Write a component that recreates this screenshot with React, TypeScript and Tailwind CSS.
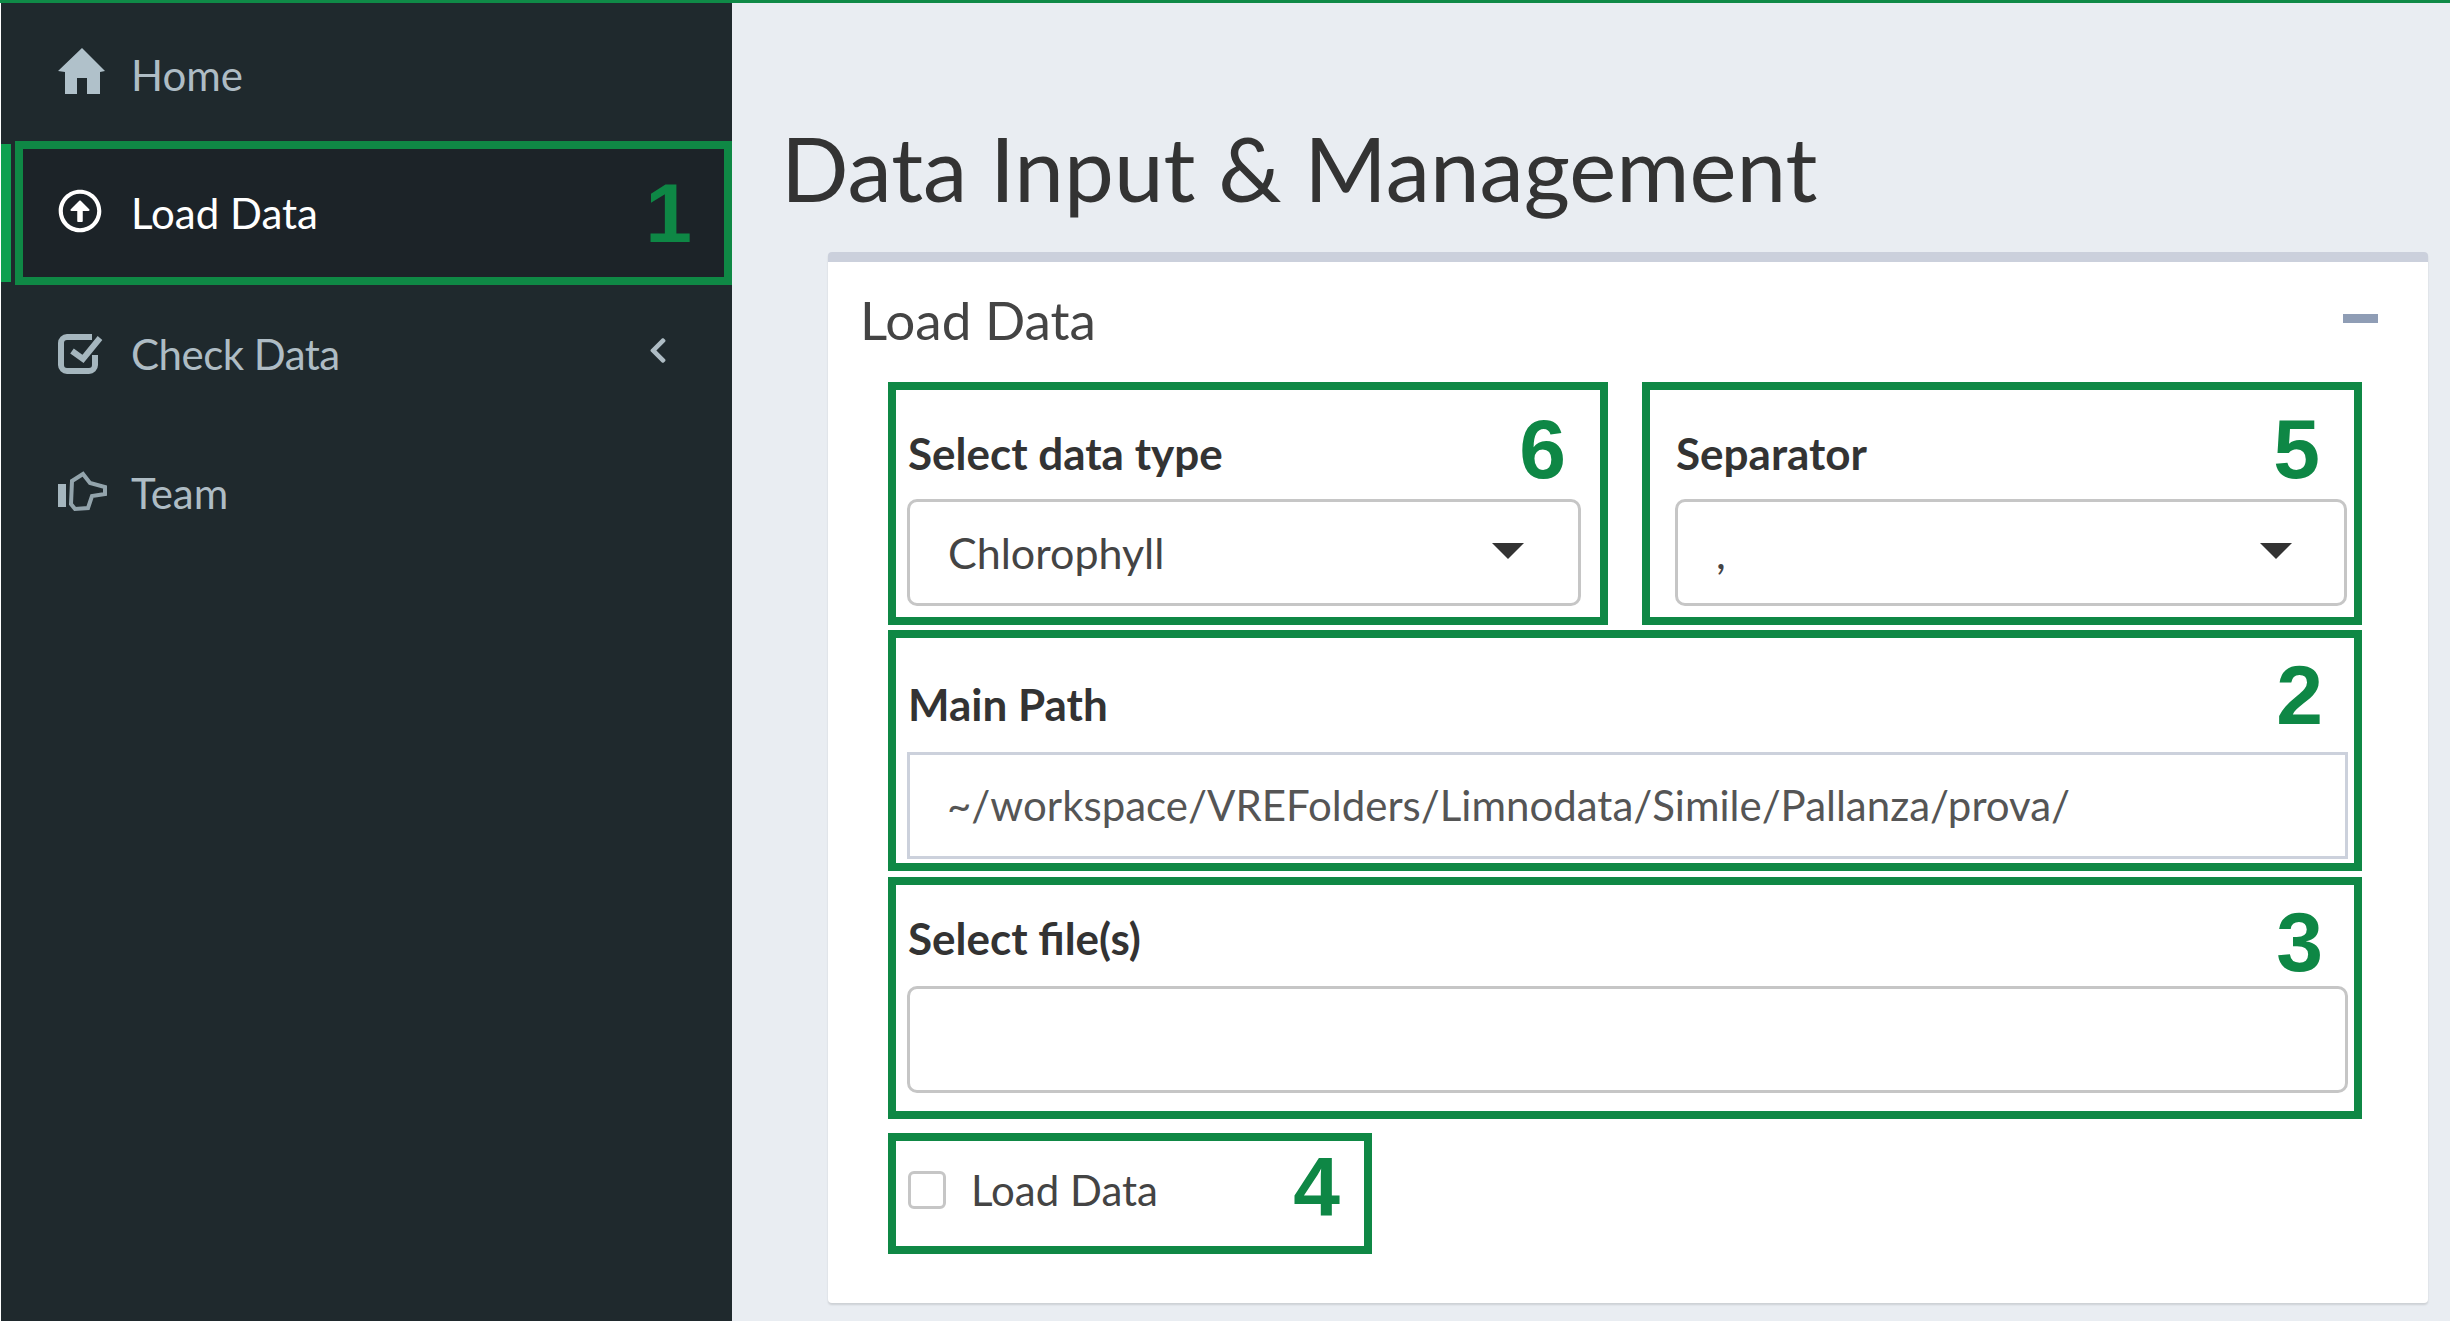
import React from 'react';
import { FaRegArrowAltCircleUp, FaChevronLeft } from 'react-icons/fa';

const Num = ({ n, className }: { n: string; className: string }) => (
  <span className={`absolute font-['Liberation_Sans'] font-bold text-[84px] leading-none text-[#0e8745] ${className}`}>{n}</span>
);

const Caret = () => (
  <svg viewBox="0 0 32 16" className="w-[32px] h-[16px] fill-[#333] -mt-[3px]">
    <polygon points="0,0 32,0 16,16" />
  </svg>
);

const HomeIcon = () => (
  <svg viewBox="0 0 47 46" className="w-[47px] h-[46px] fill-[#b0c1ca] -mt-[9px]">
    <path d="M24 0 L47 23 L42 24 V46 H29 V30 H19 V46 H7 V24 L0 23 Z" />
  </svg>
);

const CheckIcon = () => (
  <svg viewBox="0 0 45 40" className="w-[45px] h-[40px] fill-none stroke-[#a5b6be] stroke-[6px]">
    <path d="M34 3 H9 a6 6 0 0 0 -6 6 V31 a6 6 0 0 0 6 6 H31 a6 6 0 0 0 6 -6 V21" />
    <path d="M14 17 L25 25 L42 4" />
  </svg>
);

const HandIcon = () => (
  <svg viewBox="0 0 50 41" className="w-[50px] h-[41px] -mt-[4px]">
    <rect x="0" y="13" width="8" height="23" fill="#a5b6be" />
    <path d="M14 10 L25 3 L32 12 L47 16 V23 L34 25 L30 37 L17 38 L13 33 Z" fill="none" stroke="#93a4ac" strokeWidth="4" />
  </svg>
);

const Field = ({ label, className }: { label: string; className: string }) => (
  <div className={`flex items-end pl-[1px] font-bold text-[44px] leading-[50px] text-[#333] ${className}`}>{label}</div>
);

const SelectBox = ({ value, caretPad }: { value: string; caretPad: string }) => (
  <div className={`h-[107px] border-[3px] border-[#c6c6c6] rounded-[10px] bg-white flex items-center justify-between pl-[38px] ${caretPad}`}>
    <span className="text-[43px] leading-[50px] text-[#444]">{value}</span>
    <Caret />
  </div>
);

export default function App() {
  return (
    <div className="h-screen w-full overflow-hidden flex flex-col font-['Lato',sans-serif] bg-[#e9edf2]">
      <div className="h-[3px] bg-[#0f8a47]" />
      <div className="flex-1 flex min-h-0">
        {/* sidebar */}
        <aside className="w-[732px] border-l border-white bg-[#1f292d] text-[42px] text-[#aebcc4]">
          <div className="h-[138px] pl-[57px] pt-[6px] flex items-center">
            <span className="w-[73px]"><HomeIcon /></span>
            Home
          </div>
          <div className="h-[144px] flex">
            <div className="w-[10px] my-[3px] bg-[#0ea050]" />
            <div className="relative ml-[4px] flex-1 border-[8px] border-[#0f8845] bg-[#1c2328] pl-[35px] flex items-center text-white">
              <span className="w-[73px]"><FaRegArrowAltCircleUp className="w-[44px] h-[44px] -mt-[4px]" /></span>
              Load Data
              <Num n="1" className="right-[32px] top-[22px]" />
            </div>
          </div>
          <div className="h-[138px] pl-[57px] pr-[64px] flex items-center">
            <span className="w-[73px]"><CheckIcon /></span>
            <span className="tracking-[-0.5px]">Check Data</span>
            <FaChevronLeft className="ml-auto w-[20px] h-[29px] -mt-[8px]" />
          </div>
          <div className="h-[141px] pl-[57px] flex items-center">
            <span className="w-[73px]"><HandIcon /></span>
            Team
          </div>
        </aside>

        {/* main */}
        <main className="flex-1 min-w-0 pl-[96px] pr-[22px]">
          <h1 className="-ml-[47px] h-[249px] pt-[115px] text-[89px] leading-[100px] text-[#333]">Data Input &amp; Management</h1>
          <section className="h-[1051px] border-t-[10px] border-[#cbd0dc] rounded-[4px] bg-white shadow-[0_2px_2px_rgba(0,0,0,0.12)]">
            <header className="h-[120px] pl-[32px] pr-[50px] flex items-center justify-between">
              <h2 className="text-[53px] leading-[60px] text-[#444] -mt-[4px]">Load Data</h2>
              <div className="w-[35px] h-[9px] bg-[#8f9db5] -mt-[7px]" />
            </header>
            <div className="pl-[60px] pr-[66px]">
              <div className="flex justify-between">
                <div className="relative w-[720px] h-[243px] border-[8px] border-[#0f8845] pl-[11px] pr-[19px]">
                  <Field label="Select data type" className="h-[109px] pb-[21px]" />
                  <SelectBox value="Chlorophyll" caretPad="pr-[54px]" />
                  <Num n="6" className="right-[34px] top-[17px]" />
                </div>
                <div className="relative w-[720px] h-[243px] border-[8px] border-[#0f8845] pl-[25px] pr-[7px]">
                  <Field label="Separator" className="h-[109px] pb-[21px]" />
                  <SelectBox value="," caretPad="pr-[52px]" />
                  <Num n="5" className="right-[34px] top-[17px]" />
                </div>
              </div>
              <div className="relative mt-[5px] h-[241px] border-[8px] border-[#0f8845] pl-[11px] pr-[6px]">
                <Field label="Main Path" className="h-[114px] pb-[23px] text-[43px]" />
                <div className="h-[107px] border-[3px] border-[#ccd1dc] pl-[37px] flex items-center text-[42px] text-[#555]">~/workspace/VREFolders/Limnodata/Simile/Pallanza/prova/</div>
                <Num n="2" className="right-[31px] top-[15px]" />
              </div>
              <div className="relative mt-[6px] h-[242px] border-[8px] border-[#0f8845] pl-[11px] pr-[6px]">
                <Field label="Select file(s)" className="h-[101px] pb-[23px]" />
                <div className="h-[107px] border-[3px] border-[#c6c6c6] rounded-[10px]" />
                <Num n="3" className="right-[31px] top-[15px]" />
              </div>
              <div className="relative mt-[14px] w-[484px] h-[121px] border-[8px] border-[#0f8845] pl-[12px] flex items-center">
                <div className="w-[38px] h-[38px] border-[3px] border-[#c6c6c6] rounded-[6px] -mt-[8px]" />
                <span className="ml-[25px] -mt-[8px] text-[42px] leading-[50px] text-[#444]">Load Data</span>
                <Num n="4" className="right-[24px] top-[4px]" />
              </div>
            </div>
          </section>
        </main>
      </div>
    </div>
  );
}
